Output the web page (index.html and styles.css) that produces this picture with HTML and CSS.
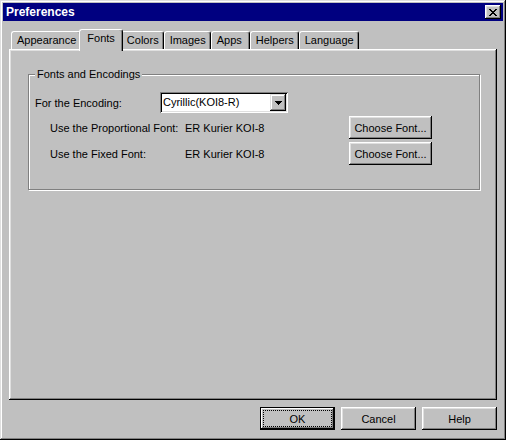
FILE: index.html
```html
<!DOCTYPE html>
<html lang="en">
<head>
    <meta charset="UTF-8">
    <title>Preferences</title>
    <link rel="stylesheet" href="styles.css">
</head>
<body>
    <div class="window">
        <div class="titlebar">
            <span class="title">Preferences</span>
            <button class="close" aria-label="Close">
                <svg width="8" height="7" viewBox="0 0 8 7" shape-rendering="crispEdges">
                    <path fill="#000" d="M0 0h2v1H0z M6 0h2v1H6z M1 1h2v1H1z M5 1h2v1H5z M2 2h4v1H2z M3 3h2v1H3z M2 4h4v1H2z M1 5h2v1H1z M5 5h2v1H5z M0 6h2v1H0z M6 6h2v1H6z"/>
                </svg>
            </button>
        </div>

        <div class="content">
            <div class="tabs">
                <div class="tab">Appearance</div>
                <div class="tab active">Fonts</div>
                <div class="tab">Colors</div>
                <div class="tab">Images</div>
                <div class="tab tab-apps">Apps</div>
                <div class="tab">Helpers</div>
                <div class="tab">Language</div>
            </div>

            <div class="panel">
                <fieldset class="group">
                    <legend>Fonts and Encodings</legend>
                    <div class="group-body">
                        <div class="row row-encoding">
                            <span class="label">For the Encoding:</span>
                            <div class="combo">
                                <span class="combo-value">Cyrillic(KOI8-R)</span>
                                <span class="combo-btn">
                                    <svg width="7" height="4" viewBox="0 0 7 4" shape-rendering="crispEdges">
                                        <path fill="#000" d="M0 0h7v1H0z M1 1h5v1H1z M2 2h3v1H2z M3 3h1v1H3z"/>
                                    </svg>
                                </span>
                            </div>
                        </div>
                        <div class="row row-font">
                            <span class="label">Use the Proportional Font:</span>
                            <span class="value">ER Kurier KOI-8</span>
                            <button class="btn btn-choose">Choose Font...</button>
                        </div>
                        <div class="row row-font">
                            <span class="label">Use the Fixed Font:</span>
                            <span class="value">ER Kurier KOI-8</span>
                            <button class="btn btn-choose">Choose Font...</button>
                        </div>
                    </div>
                </fieldset>
            </div>

            <div class="footer">
                <button class="btn btn-dialog btn-default"><span class="focus">OK</span></button>
                <button class="btn btn-dialog">Cancel</button>
                <button class="btn btn-dialog">Help</button>
            </div>
        </div>
    </div>
</body>
</html>
```

FILE: styles.css
```css
* { box-sizing: border-box; }
body { margin: 0; background: #c0c0c0; font-family: "Liberation Sans", Arial, sans-serif; font-size: 11px; color: #000; }

.window { width: 506px; height: 440px; padding: 3px; background: #c0c0c0;
    box-shadow: inset -1px -1px #000, inset 1px 1px #dfdfdf, inset -2px -2px #808080, inset 2px 2px #fff; }

.titlebar { height: 18px; background: #000080; color: #fff; display: flex; align-items: center; justify-content: space-between; padding: 0 2px 0 3px; }
.title { font-weight: bold; font-size: 12px; }
.close { width: 16px; height: 14px; padding: 0; border: 0; background: #c0c0c0; display: flex; align-items: center; justify-content: center;
    box-shadow: inset -1px -1px #000, inset 1px 1px #fff, inset -2px -2px #808080, inset 2px 2px #dfdfdf; }

.content { padding: 8px 6px 0; }

.tabs { display: flex; height: 20px; padding-left: 2px; }
.tab { height: 18px; margin-top: 2px; padding: 0 4px 0 5px; line-height: 16px; background: #c0c0c0;
    border: 1px solid #fff; border-bottom: 0; border-right-color: #000; border-radius: 3px 3px 0 0; box-shadow: inset -1px 0 #808080; }
.tab.active { position: relative; z-index: 1; height: 22px; margin: 0 -2px; padding: 0 7px; line-height: 16px; }
.tab-apps { padding-right: 7px; }

.panel { height: 351px; padding: 19px 17px 0 19px;
    box-shadow: inset -1px -1px #000, inset 1px 1px #fff, inset -2px -2px #808080, inset 2px 2px #dfdfdf; }

.group { margin: 0; padding: 0; min-width: 0; border: 1px solid #808080; box-shadow: inset 1px 1px #fff, 1px 1px #fff; }
.group legend { margin-left: 6px; padding: 0 2px; line-height: 13px; background: #c0c0c0; }
.group-body { padding: 11px 0 24px; }

.row { display: flex; align-items: center; }
.row-encoding { height: 21px; padding-left: 6px; }
.row-encoding .label { width: 125px; }
.row-font { height: 23px; margin-top: 3px; padding-left: 21px; }
.row-font .label { width: 135px; }
.row-font .value { width: 164px; }

.combo { width: 128px; height: 21px; padding: 2px; display: flex; background: #fff;
    box-shadow: inset 1px 1px #808080, inset -1px -1px #fff, inset 2px 2px #000, inset -2px -2px #dfdfdf; }
.combo-value { flex: 1; padding-left: 1px; line-height: 17px; }
.combo-btn { width: 16px; height: 17px; display: flex; align-items: center; justify-content: center; background: #c0c0c0;
    box-shadow: inset -1px -1px #000, inset 1px 1px #dfdfdf, inset -2px -2px #808080, inset 2px 2px #fff; }

.btn { font: inherit; color: #000; border: 0; padding: 0; background: #c0c0c0; height: 23px;
    box-shadow: inset -1px -1px #000, inset 1px 1px #fff, inset -2px -2px #808080, inset 2px 2px #dfdfdf; }
.btn-choose { width: 83px; }

.footer { display: flex; justify-content: flex-end; gap: 6px; margin-top: 7px; }
.btn-dialog { width: 75px; }
.btn-default { padding: 3px; box-shadow: inset 0 0 0 1px #000, inset -2px -2px #000, inset 2px 2px #fff, inset -3px -3px #808080; }
.focus { display: flex; align-items: center; justify-content: center; height: 100%; border: 1px dotted #000; }
```
